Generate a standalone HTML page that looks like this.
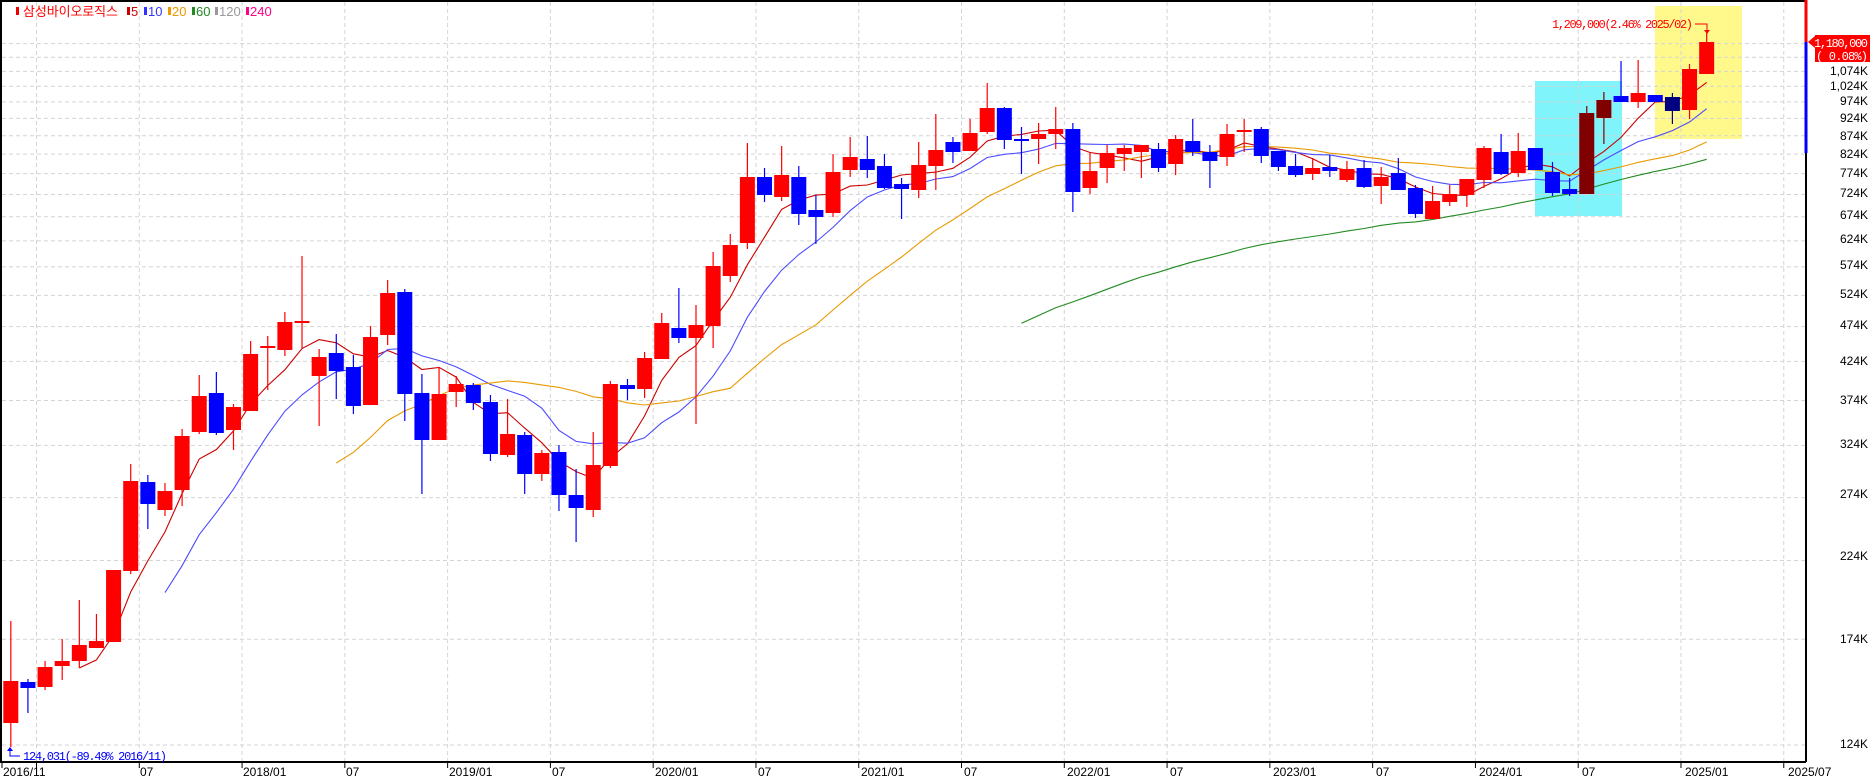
<!DOCTYPE html>
<html><head><meta charset="utf-8">
<style>
html,body{margin:0;padding:0;background:#fff;}
svg{display:block;}
text{font-family:"Liberation Sans","Noto Sans CJK KR",sans-serif;}
.m{font-family:"Liberation Mono","Noto Sans CJK KR",monospace;}
</style></head>
<body>
<svg id="c" xmlns="http://www.w3.org/2000/svg" width="1873" height="780" viewBox="0 0 1873 780">
<rect width="1873" height="780" fill="#fff"/>
<g id="bg"></g>
<rect x="1535" y="81" width="87" height="135" fill="#80f4fb"/>
<rect x="1655" y="6" width="87" height="133" fill="#fff98c"/>
<g id="grid"></g>
<g id="ma"></g>
<g id="cd"></g>
<!-- frame -->
<line x1="0" y1="1" x2="1806" y2="1" stroke="#000" stroke-width="2"/>
<line x1="1" y1="0" x2="1" y2="762" stroke="#000" stroke-width="2"/>
<line x1="0" y1="762" x2="1806" y2="762" stroke="#000" stroke-width="2"/>
<line x1="1806" y1="0" x2="1806" y2="762" stroke="#000" stroke-width="2"/>
<line x1="1806" y1="0" x2="1806" y2="42" stroke="#ff0000" stroke-width="3"/>
<line x1="1806" y1="42" x2="1806" y2="153" stroke="#0000ff" stroke-width="3"/>
<!-- legend -->
<g font-size="13">
<rect x="16" y="7" width="3" height="8" fill="#e00"/>
<text x="23" y="16" fill="#f00" textLength="95">삼성바이오로직스</text>
<rect x="127" y="7" width="3" height="8" fill="#c00"/><text x="131" y="16" fill="#c00">5</text>
<rect x="144" y="7" width="3" height="8" fill="#33f"/><text x="148" y="16" fill="#33f">10</text>
<rect x="168" y="7" width="3" height="8" fill="#e90"/><text x="172" y="16" fill="#e90">20</text>
<rect x="192" y="7" width="3" height="8" fill="#282"/><text x="196" y="16" fill="#282">60</text>
<rect x="215" y="7" width="3" height="8" fill="#999"/><text x="219" y="16" fill="#999">120</text>
<rect x="246" y="7" width="3" height="8" fill="#f08"/><text x="250" y="16" fill="#f08">240</text>
</g>
<!-- annotations -->
<text x="1552" y="28" fill="#f00" font-size="12" class="m" textLength="141">1,209,000(2.46% 2025/02)</text>
<polyline points="1695,24 1707,24 1707,33" fill="none" stroke="#f00" stroke-width="1"/>
<polygon points="1704,30 1710,30 1707,34" fill="#f00"/>
<polyline points="10,749 10,756 20,756" fill="none" stroke="#00f" stroke-width="1"/>
<polygon points="7,751 13,751 10,747" fill="#00f"/>
<text x="23" y="760" fill="#00f" font-size="12" class="m" textLength="144">124,031(-89.49% 2016/11)</text>
<!-- price box -->
<polygon points="1808,42 1815,36 1815,48" fill="#f00"/>
<rect x="1815" y="35" width="55" height="27" fill="#f00"/>
<text x="1868" y="47" fill="#fff" font-size="12" class="m" text-anchor="end" textLength="54">1,180,000</text>
<text x="1868" y="60" fill="#fff" font-size="12" class="m" text-anchor="end" textLength="52">( 0.08%)</text>
<g id="ax" font-size="12" class="m" fill="#000"></g>
<g font-size="12" fill="#000" class="m">
<text x="3" y="776">2016/11</text>
<text x="140" y="776">07</text>
<text x="243" y="776">2018/01</text>
<text x="346" y="776">07</text>
<text x="449" y="776">2019/01</text>
<text x="552" y="776">07</text>
<text x="655" y="776">2020/01</text>
<text x="758" y="776">07</text>
<text x="861" y="776">2021/01</text>
<text x="964" y="776">07</text>
<text x="1067" y="776">2022/01</text>
<text x="1170" y="776">07</text>
<text x="1273" y="776">2023/01</text>
<text x="1376" y="776">07</text>
<text x="1479" y="776">2024/01</text>
<text x="1582" y="776">07</text>
<text x="1685" y="776">2025/01</text>
<text x="1788" y="776">2025/07</text>
</g>
<g fill="#000" font-size="12" class="m" text-anchor="end">
<text x="1868" y="75">1,074K</text>
<text x="1868" y="90">1,024K</text>
<text x="1868" y="105">974K</text>
<text x="1868" y="122">924K</text>
<text x="1868" y="140">874K</text>
<text x="1868" y="158">824K</text>
<text x="1868" y="177">774K</text>
<text x="1868" y="197">724K</text>
<text x="1868" y="219">674K</text>
<text x="1868" y="243">624K</text>
<text x="1868" y="269">574K</text>
<text x="1868" y="298">524K</text>
<text x="1868" y="329">474K</text>
<text x="1868" y="365">424K</text>
<text x="1868" y="404">374K</text>
<text x="1868" y="448">324K</text>
<text x="1868" y="498">274K</text>
<text x="1868" y="560">224K</text>
<text x="1868" y="643">174K</text>
<text x="1868" y="748">124K</text>
</g>
</svg>
<script>
(function(){
var NS="http://www.w3.org/2000/svg";
function el(p,t,a){var e=document.createElementNS(NS,t);for(var k in a)e.setAttribute(k,a[k]);p.appendChild(e);return e;}
var Y=function(p){return 745-312*Math.log(p/124000);};
var grid=document.getElementById('grid');
for(var p=124000;p<=1174000;p+=50000){var y=Y(p);el(grid,'line',{x1:2,x2:1805,y1:y,y2:y,stroke:'#d4d4d4','stroke-dasharray':'4 3'});}
for(var k=0;k<=17;k++){var x=36.5+102.78*k;el(grid,'line',{x1:x,x2:x,y1:2,y2:762,stroke:'#d4d4d4','stroke-dasharray':'4 3'});el(grid,'line',{x1:x,x2:x,y1:762,y2:768,stroke:'#000'});}
el(grid,'line',{x1:2,x2:2,y1:762,y2:768,stroke:'#000'});
var D=[
[681,723,621,747,'r'],[682,688,679,713,'b'],[667,687,661,690,'r'],[661,666,639,680,'r'],[645,661,600,668,'r'],
[641,648,614,648,'r'],[570,642,570,642,'r'],[481,571,464,574,'r'],[482,504,475,529,'b'],[491,510,483,516,'r'],
[436,490,429,506,'r'],[396,432,375,434,'r'],[393,433,372,435,'b'],[407,430,404,450,'r'],[354,411,341,411,'r'],
[346,348,336,390,'r'],[322,350,312,356,'r'],[321,323,256,348,'r'],[357,376,349,426,'r'],[353,371,334,399,'b'],
[367,406,355,414,'b'],[337,405,326,405,'r'],[293,335,280,345,'r'],[292,394,289,421,'b'],[393,440,374,494,'b'],
[394,440,367,440,'r'],[384,392,376,407,'r'],[385,403,383,410,'b'],[402,454,395,461,'b'],[434,455,399,457,'r'],
[435,474,432,494,'b'],[453,474,450,481,'r'],[452,495,445,511,'b'],[495,508,469,542,'b'],[465,510,432,517,'r'],
[384,466,381,468,'r'],[385,389,379,400,'b'],[358,389,352,398,'r'],[323,359,313,359,'r'],[328,338,288,343,'b'],
[325,338,305,424,'r'],[266,326,252,348,'r'],[245,276,234,282,'r'],[177,243,143,249,'r'],[177,195,168,202,'b'],
[175,197,146,201,'r'],[177,214,166,225,'b'],[210,217,195,244,'b'],[172,213,154,217,'r'],[157,170,137,177,'r'],
[159,170,136,178,'b'],[166,188,154,189,'b'],[184,189,178,219,'b'],[165,190,142,198,'r'],[150,166,114,190,'r'],
[142,152,137,163,'b'],[133,151,119,151,'r'],[108,132,83,134,'r'],[108,140,107,149,'b'],[139,141,127,174,'b'],
[134,139,123,164,'r'],[129,134,107,149,'r'],[129,192,123,212,'b'],[171,188,152,194,'r'],[153,168,145,183,'r'],
[148,154,145,171,'r'],[145,152,145,178,'r'],[149,168,143,172,'b'],[139,164,135,175,'r'],[141,152,119,156,'b'],
[152,161,145,188,'b'],[134,157,124,166,'r'],[130,132,119,152,'r'],[129,156,127,163,'b'],[151,167,151,171,'b'],
[166,175,154,177,'b'],[168,174,158,180,'r'],[167,171,155,177,'b'],[169,180,161,182,'r'],[168,187,160,188,'b'],
[177,186,167,204,'r'],[173,190,158,190,'b'],[188,214,185,218,'b'],[201,219,186,219,'r'],[194,202,185,206,'r'],
[179,195,179,207,'r'],[148,180,146,188,'r'],[152,174,134,175,'b'],[151,173,133,177,'r'],[148,170,148,170,'b'],
[172,193,162,196,'b'],[189,194,178,196,'b'],[113,194,106,194,'R'],[100,118,92,144,'R'],[96,102,61,102,'b'],
[93,102,60,108,'r'],[95,102,95,102,'b'],[97,111,93,124,'N'],[69,110,64,119,'r'],[42,74,33,74,'r']];
var col={r:'#ff0000',b:'#0000ff',R:'#800000',N:'#000080'};
var cd=document.getElementById('cd');
var X=function(i){return 10.8+17.13*i;};
var closes=[];
D.forEach(function(d,i){
 var x=X(i),c=col[d[4]];
 el(cd,'line',{x1:x,x2:x,y1:d[2],y2:d[3],stroke:c,'stroke-width':1.2});
 var h=Math.max(2,d[1]-d[0]);
 el(cd,'rect',{x:x-7.5,y:d[0],width:15,height:h,fill:c});
 var cy=(d[4]=='r'||d[4]=='R')?d[0]:d[1];
 closes.push(Math.exp((745-cy)/312));
});
var ma=document.getElementById('ma');
[[5,'#cc0000'],[10,'#4b4bff'],[20,'#e89a00'],[60,'#228b22']].forEach(function(m){
 var n=m[0],pts=[];
 for(var i=n-1;i<closes.length;i++){var s=0;for(var j=i-n+1;j<=i;j++)s+=closes[j];pts.push(X(i).toFixed(1)+','+Y(s/n*124000).toFixed(1));}
 el(ma,'polyline',{points:pts.join(' '),fill:'none',stroke:m[1],'stroke-width':1.1});
});
})();
</script>
</body></html>
